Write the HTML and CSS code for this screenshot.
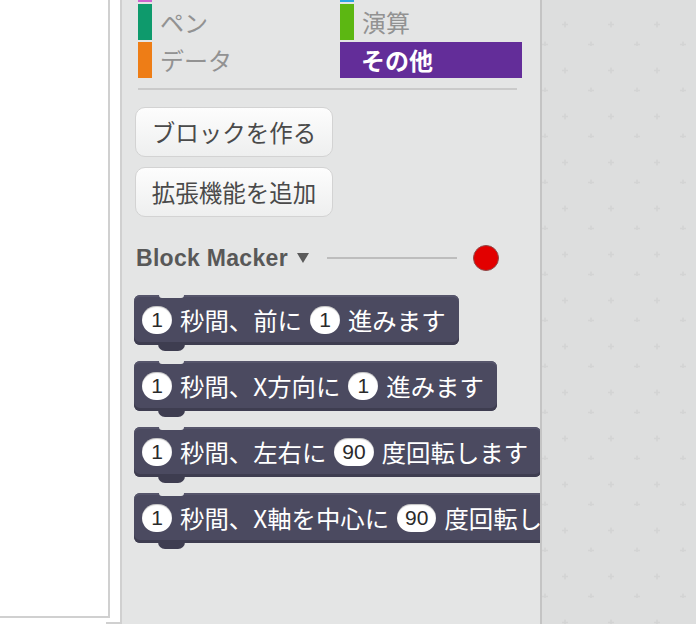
FILE: index.html
```html
<!DOCTYPE html>
<html lang="ja">
<head>
<meta charset="utf-8">
<title>Scratch palette</title>
<link rel="stylesheet" href="styles.css">
</head>
<body>
<div class="app">
  <div class="stage-col">
    <div class="stage"></div>
    <div class="pane-edge"></div>
  </div>

  <div class="palette">
    <div class="cats">
      <div class="cat"><span class="bar c-sound"></span></div>
      <div class="cat"><span class="bar c-sensing"></span></div>
      <div class="cat"><span class="bar c-pen"></span><span class="cat-label">ペン</span></div>
      <div class="cat"><span class="bar c-op"></span><span class="cat-label">演算</span></div>
      <div class="cat"><span class="bar c-data"></span><span class="cat-label">データ</span></div>
      <div class="cat cat-selected"><span class="cat-label">その他</span></div>
    </div>

    <div class="sep"></div>

    <div class="btns">
      <div class="btn">ブロックを作る</div>
      <div class="btn">拡張機能を追加</div>
    </div>

    <div class="ext-header">
      <span class="ext-name">Block Macker</span>
      <span class="tri"></span>
      <span class="ext-line"></span>
      <span class="status"></span>
    </div>

    <div class="blocks">
      <div class="block"><span class="num">1</span><span class="lbl">秒間、前に</span><span class="num">1</span><span class="lbl">進みます</span></div>
      <div class="block"><span class="num">1</span><span class="lbl">秒間、X方向に</span><span class="num">1</span><span class="lbl">進みます</span></div>
      <div class="block"><span class="num">1</span><span class="lbl">秒間、左右に</span><span class="num">90</span><span class="lbl">度回転します</span></div>
      <div class="block"><span class="num">1</span><span class="lbl">秒間、X軸を中心に</span><span class="num">90</span><span class="lbl">度回転します</span></div>
    </div>
  </div>

  <div class="scripts">
    <svg class="grid" width="100%" height="100%" aria-hidden="true">
      <defs>
        <pattern id="plus" width="46" height="46" patternUnits="userSpaceOnUse">
          <path d="M0 44.5h6M3 41.5v6M20 24.5h6M23 21.5v6" stroke="#d3d4d4" stroke-width="1.6" fill="none"/>
        </pattern>
      </defs>
      <rect width="100%" height="100%" fill="url(#plus)"/>
    </svg>
  </div>
</div>
</body>
</html>
```

FILE: styles.css
```css
html, body {
  margin: 0;
  padding: 0;
  background: #ffffff;
}

.app {
  display: flex;
  width: 696px;
  height: 624px;
  overflow: hidden;
}

/* left stage column */
.stage-col {
  width: 120px;
  flex: none;
  background: #ffffff;
}

.stage {
  width: 108px;
  height: 616px;
  border-right: 2px solid #d0d0d0;
  border-bottom: 2px solid #d0d0d0;
}

.pane-edge {
  margin-top: 4px;
  margin-left: 106px;
  border-top: 2px solid #d0d0d0;
}

/* palette */
.palette {
  width: 418px;
  flex: none;
  background: #e4e5e5;
  border-left: 2px solid #d0d0d0;
  border-right: 2px solid #c4c4c4;
  overflow: hidden;
  font-family: "Noto Sans CJK JP", "Liberation Sans", sans-serif;
}

.cats {
  display: grid;
  grid-template-columns: 182px 182px;
  grid-template-rows: 2px 36px 36px;
  column-gap: 20px;
  row-gap: 2px;
  margin-left: 16px;
}

.cat {
  display: flex;
  align-items: stretch;
  overflow: hidden;
}

.bar {
  width: 14px;
  flex: none;
}

.c-sound { background: #cf63cf; }
.c-sensing { background: #2ca5e2; }
.c-pen { background: #0e9a6c; }
.c-op { background: #5cb712; }
.c-data { background: #ee7d16; }

.cat-label {
  padding-left: 8px;
  font-size: 24px;
  line-height: 36px;
  color: #929292;
}

.cat-selected {
  background: #632d99;
}

.cat-selected .cat-label {
  padding-left: 21px;
  color: #ffffff;
  font-weight: bold;
}

.sep {
  height: 2px;
  margin: 10px 23px 0 16px;
  background: #cacaca;
}

.btns {
  display: flex;
  flex-direction: column;
  gap: 10px;
  margin: 17px 0 0 13px;
}

.btn {
  box-sizing: border-box;
  width: 198px;
  height: 50px;
  border: 1px solid #d3d3d3;
  border-radius: 10px;
  background: linear-gradient(#fdfdfd, #eeefef);
  color: #4a4a4a;
  font-size: 23.5px;
  line-height: 48px;
  text-align: center;
}

.ext-header {
  display: flex;
  align-items: center;
  height: 30px;
  margin: 26px 0 0 14px;
}

.ext-name {
  font-family: "Liberation Sans", Arial, sans-serif;
  font-weight: bold;
  font-size: 23px;
  letter-spacing: 0.3px;
  color: #585858;
}

.tri {
  width: 0;
  height: 0;
  margin-left: 9px;
  border-left: 6.5px solid transparent;
  border-right: 6.5px solid transparent;
  border-top: 10px solid #5a5a5a;
}

.ext-line {
  width: 130px;
  height: 2px;
  margin-left: 18px;
  background: #bdbdbd;
}

.status {
  width: 24px;
  height: 24px;
  margin-left: 16px;
  border-radius: 50%;
  background: #e20000;
  border: 1px solid #8e4a4a;
}

/* blocks */
.blocks {
  display: flex;
  flex-direction: column;
  align-items: flex-start;
  gap: 16px;
  margin: 22px 0 0 12px;
}

.block {
  position: relative;
  box-sizing: border-box;
  display: flex;
  align-items: center;
  gap: 8px;
  width: max-content;
  height: 50px;
  padding: 0 13px 0 8px;
  flex: none;
  background: #4b4a60;
  border-radius: 6px;
  box-shadow: inset 0 -3px 0 #3e3d50, inset 0 2px 0 #56556b;
  color: #ffffff;
  font-size: 24.4px;
  white-space: nowrap;
}

.block::before {
  content: "";
  position: absolute;
  left: 25px;
  top: 0;
  width: 25px;
  height: 3px;
  background: #e4e5e5;
  border-radius: 0 0 5px 5px;
}

.block::after {
  content: "";
  position: absolute;
  left: 24px;
  top: 49px;
  width: 27px;
  height: 7px;
  background: #3e3d50;
  border-radius: 0 0 8px 8px;
}

.lbl {
  line-height: 1;
}

.num {
  box-sizing: border-box;
  min-width: 30px;
  height: 28px;
  padding: 0 8px;
  border-radius: 14px;
  background: #ffffff;
  color: #2a2a2a;
  font-family: "Liberation Sans", Arial, sans-serif;
  font-size: 21px;
  line-height: 28px;
  text-align: center;
  box-shadow: inset 0 1px 1px rgba(0, 0, 0, 0.25);
}

/* scripts area */
.scripts {
  flex: 1;
  background: #dddede;
}

.grid {
  display: block;
}
```
